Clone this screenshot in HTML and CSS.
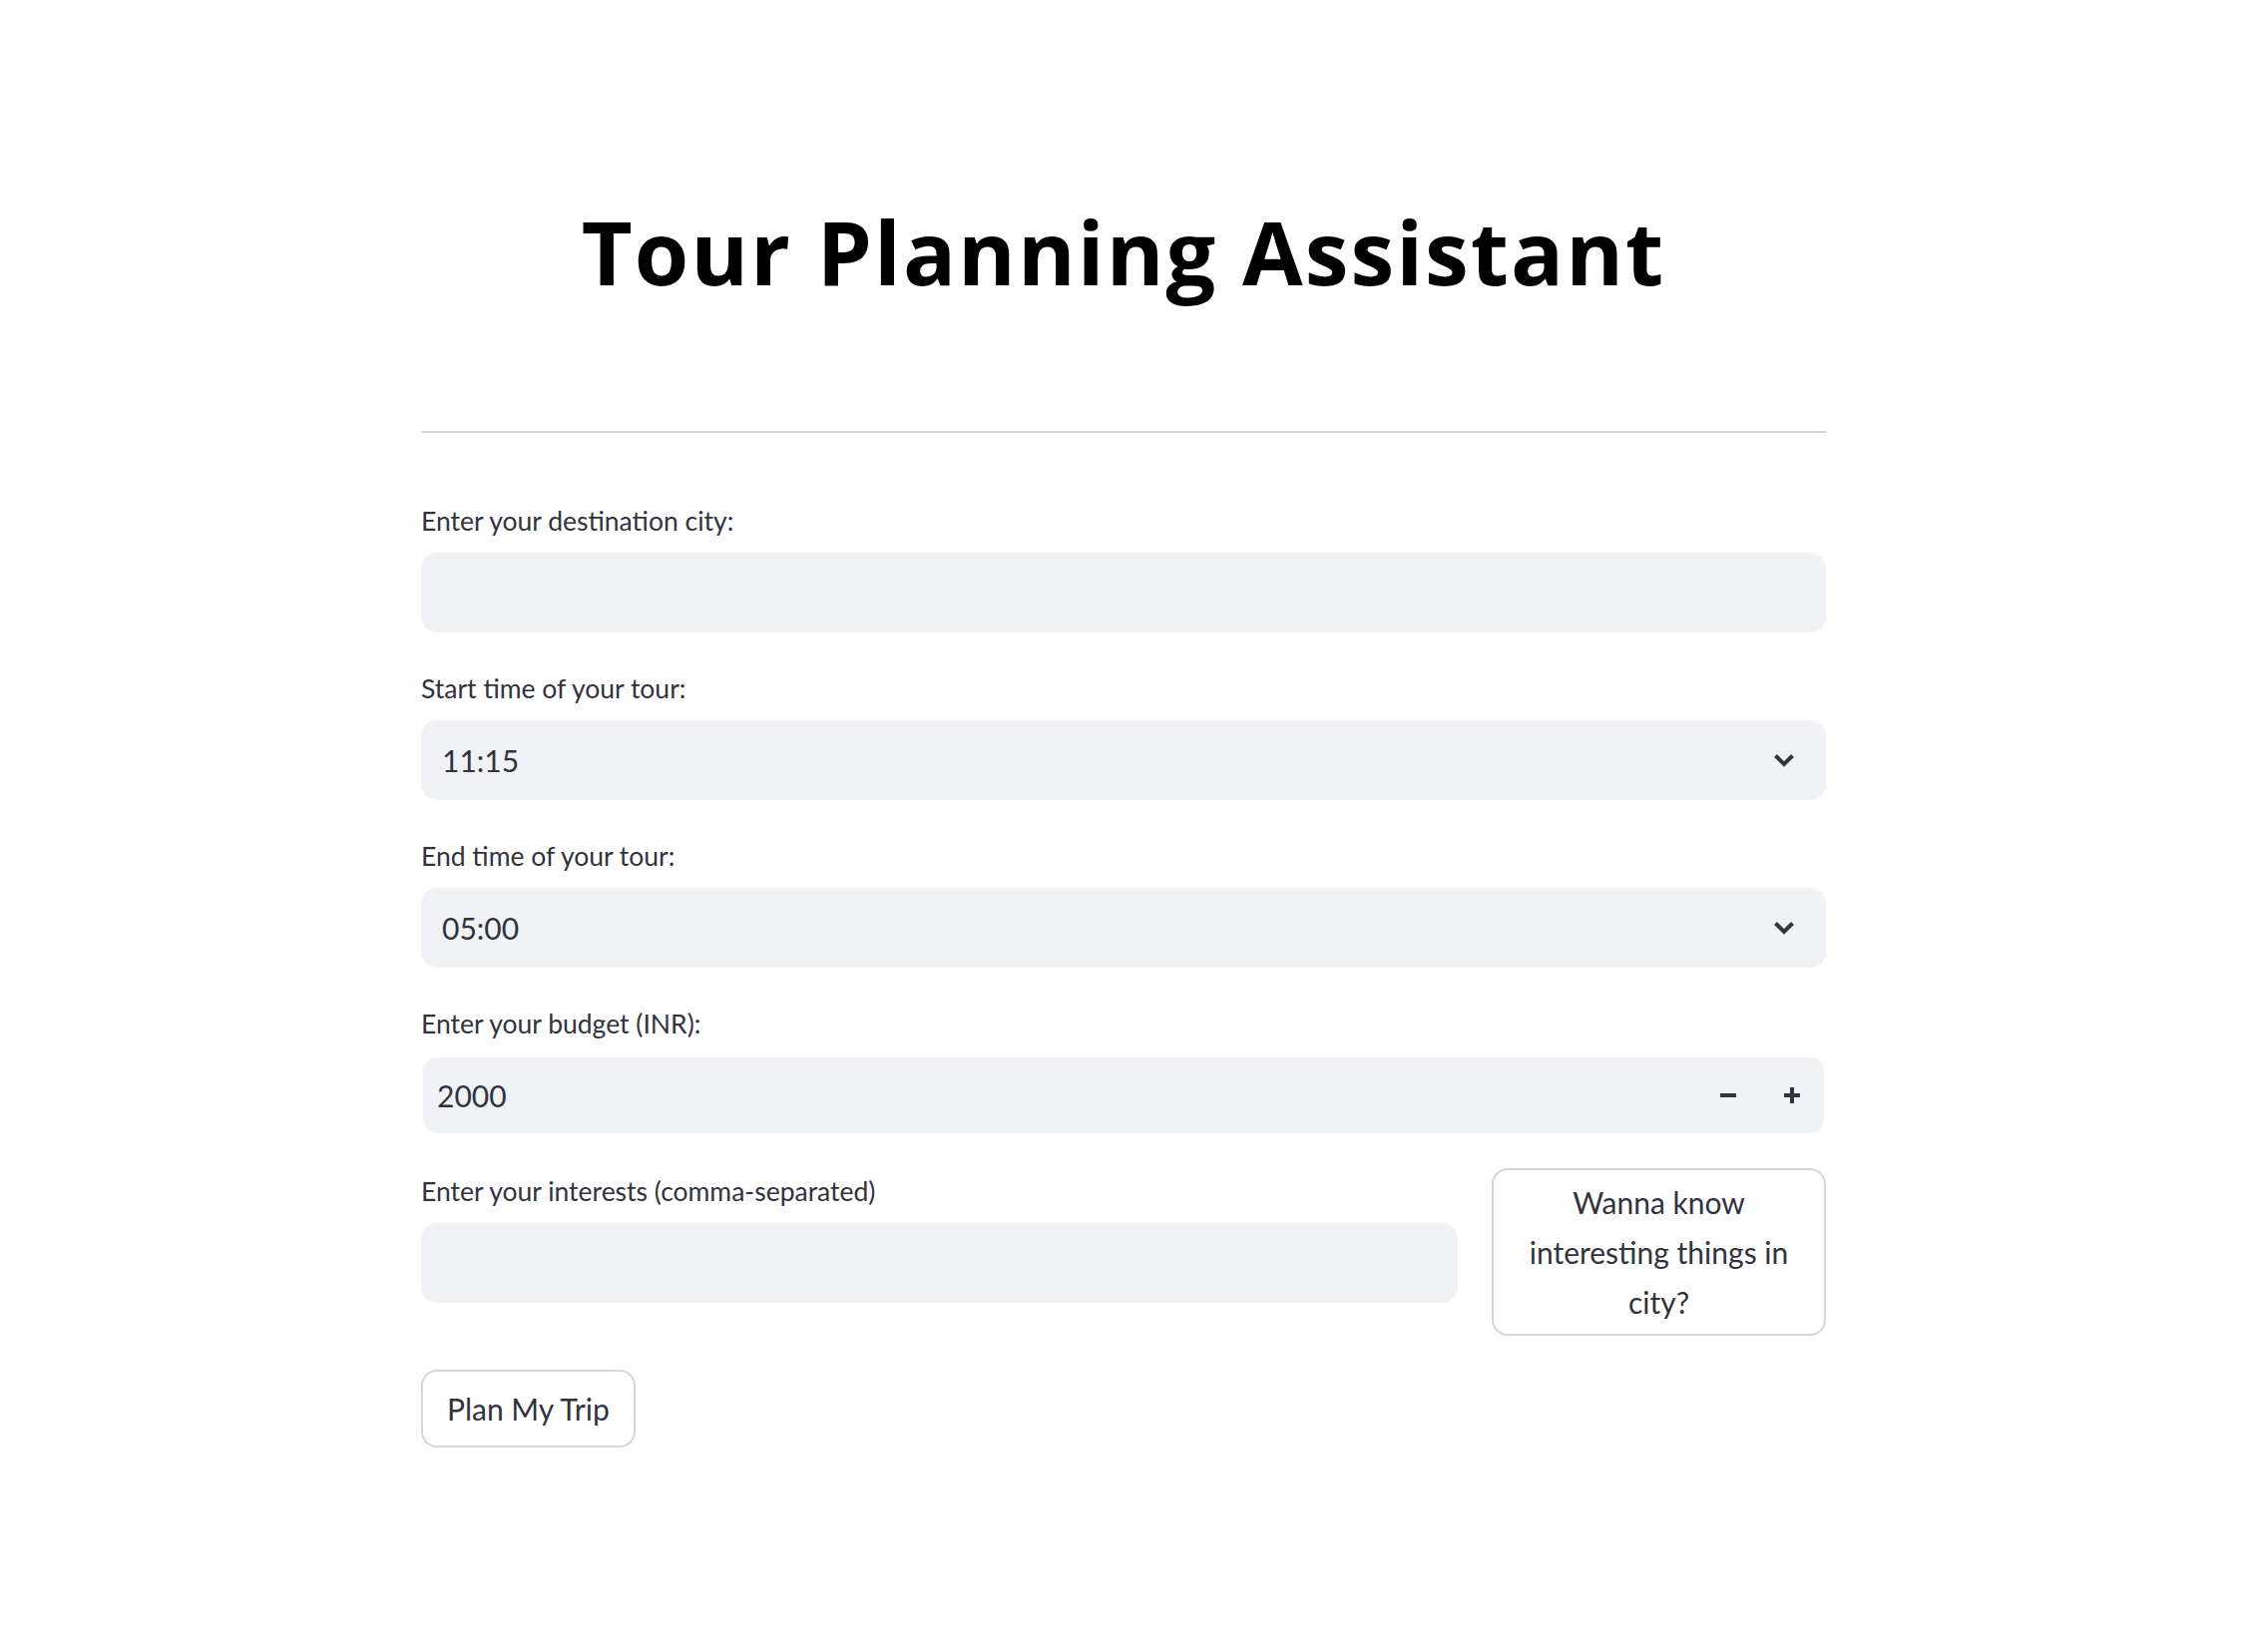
FILE: index.html
```html
<!DOCTYPE html>
<html lang="en">
<head>
<meta charset="utf-8">
<title>Tour Planning Assistant</title>
<link rel="stylesheet" href="styles.css">
</head>
<body>
<main class="main">
  <h1 class="title">Tour Planning Assistant</h1>
  <hr class="divider">
  <div class="stack">
    <div class="field">
      <label class="label">Enter your destination city:</label>
      <div class="input"></div>
    </div>
    <div class="field">
      <label class="label">Start time of your tour:</label>
      <div class="input select">
        <span class="value">11:15</span>
        <svg class="chevron" width="22" height="14" viewBox="0 0 22 14"><path d="M2.5 2.5 L11 11 L19.5 2.5" fill="none" stroke="#31333f" stroke-width="4"/></svg>
      </div>
    </div>
    <div class="field">
      <label class="label">End time of your tour:</label>
      <div class="input select">
        <span class="value">05:00</span>
        <svg class="chevron" width="22" height="14" viewBox="0 0 22 14"><path d="M2.5 2.5 L11 11 L19.5 2.5" fill="none" stroke="#31333f" stroke-width="4"/></svg>
      </div>
    </div>
    <div class="field">
      <label class="label">Enter your budget (INR):</label>
      <div class="number">
        <span class="number-value">2000</span>
        <span class="step"><svg width="16" height="16" viewBox="0 0 16 16"><rect x="0" y="6" width="16" height="4" fill="#31333f"/></svg></span>
        <span class="step"><svg width="16" height="16" viewBox="0 0 16 16"><rect x="0" y="6" width="16" height="4" fill="#31333f"/><rect x="6" y="0" width="4" height="16" fill="#31333f"/></svg></span>
      </div>
    </div>
    <div class="row">
      <div class="field">
        <label class="label">Enter your interests (comma-separated)</label>
        <div class="input"></div>
      </div>
      <div class="side">
        <button class="btn btn-wide">Wanna know interesting things in city?</button>
      </div>
    </div>
    <div class="actions">
      <button class="btn">Plan My Trip</button>
    </div>
  </div>
</main>
</body>
</html>
```
FILE: styles.css
```css
* { box-sizing: border-box; }

body {
  margin: 0;
  background: #ffffff;
  color: #31333f;
  font-family: "Lato", "Noto Sans", sans-serif;
}

.main {
  box-sizing: content-box;
  width: 1408px;
  margin: 0 auto;
  padding: 199px 8px 80px 0;
}

.title {
  margin: 0;
  font-family: "Open Sans", "Noto Sans", sans-serif;
  font-weight: 700;
  font-size: 88px;
  line-height: 106px;
  letter-spacing: 2px;
  text-align: center;
  color: #000000;
}

.divider {
  margin: 127px 0 64px;
  border: 0;
  border-top: 2px solid #d6d6d9;
  height: 0;
}

.stack {
  display: flex;
  flex-direction: column;
  gap: 32px;
}

.field {
  display: flex;
  flex-direction: column;
}

.label {
  font-size: 26.5px;
  line-height: 48px;
  margin-bottom: 8px;
  color: #31333f;
}

.input {
  height: 80px;
  background: #f0f2f6;
  border-radius: 16px;
}

.select {
  display: flex;
  align-items: center;
  justify-content: space-between;
  padding: 0 31px 0 21px;
}

.value {
  font-size: 30px;
  line-height: 80px;
}

.chevron {
  display: block;
}

.number {
  display: flex;
  align-items: center;
  height: 80px;
  border: 2px solid #ffffff;
  border-radius: 16px;
  background: #f0f2f6;
  padding-left: 14px;
}

.number-value {
  flex: 1;
  font-size: 30px;
  line-height: 76px;
}

.step {
  width: 64px;
  height: 76px;
  display: flex;
  align-items: center;
  justify-content: center;
}

.step svg { display: block; }

.row {
  display: grid;
  grid-template-columns: 1039px 1fr;
  gap: 34px;
  align-items: start;
}

.side {
  display: flex;
  padding-top: 1px;
}

.btn {
  display: inline-flex;
  align-items: center;
  justify-content: center;
  min-height: 78px;
  padding: 7px 24px;
  border: 2px solid #d6d6d9;
  border-radius: 16px;
  background: #ffffff;
  color: #31333f;
  font-family: "Lato", "Noto Sans", sans-serif;
  font-size: 30px;
  line-height: 50px;
  text-align: center;
}

.btn-wide {
  width: 100%;
}

.actions {
  display: flex;
  margin-top: 2px;
}
```
